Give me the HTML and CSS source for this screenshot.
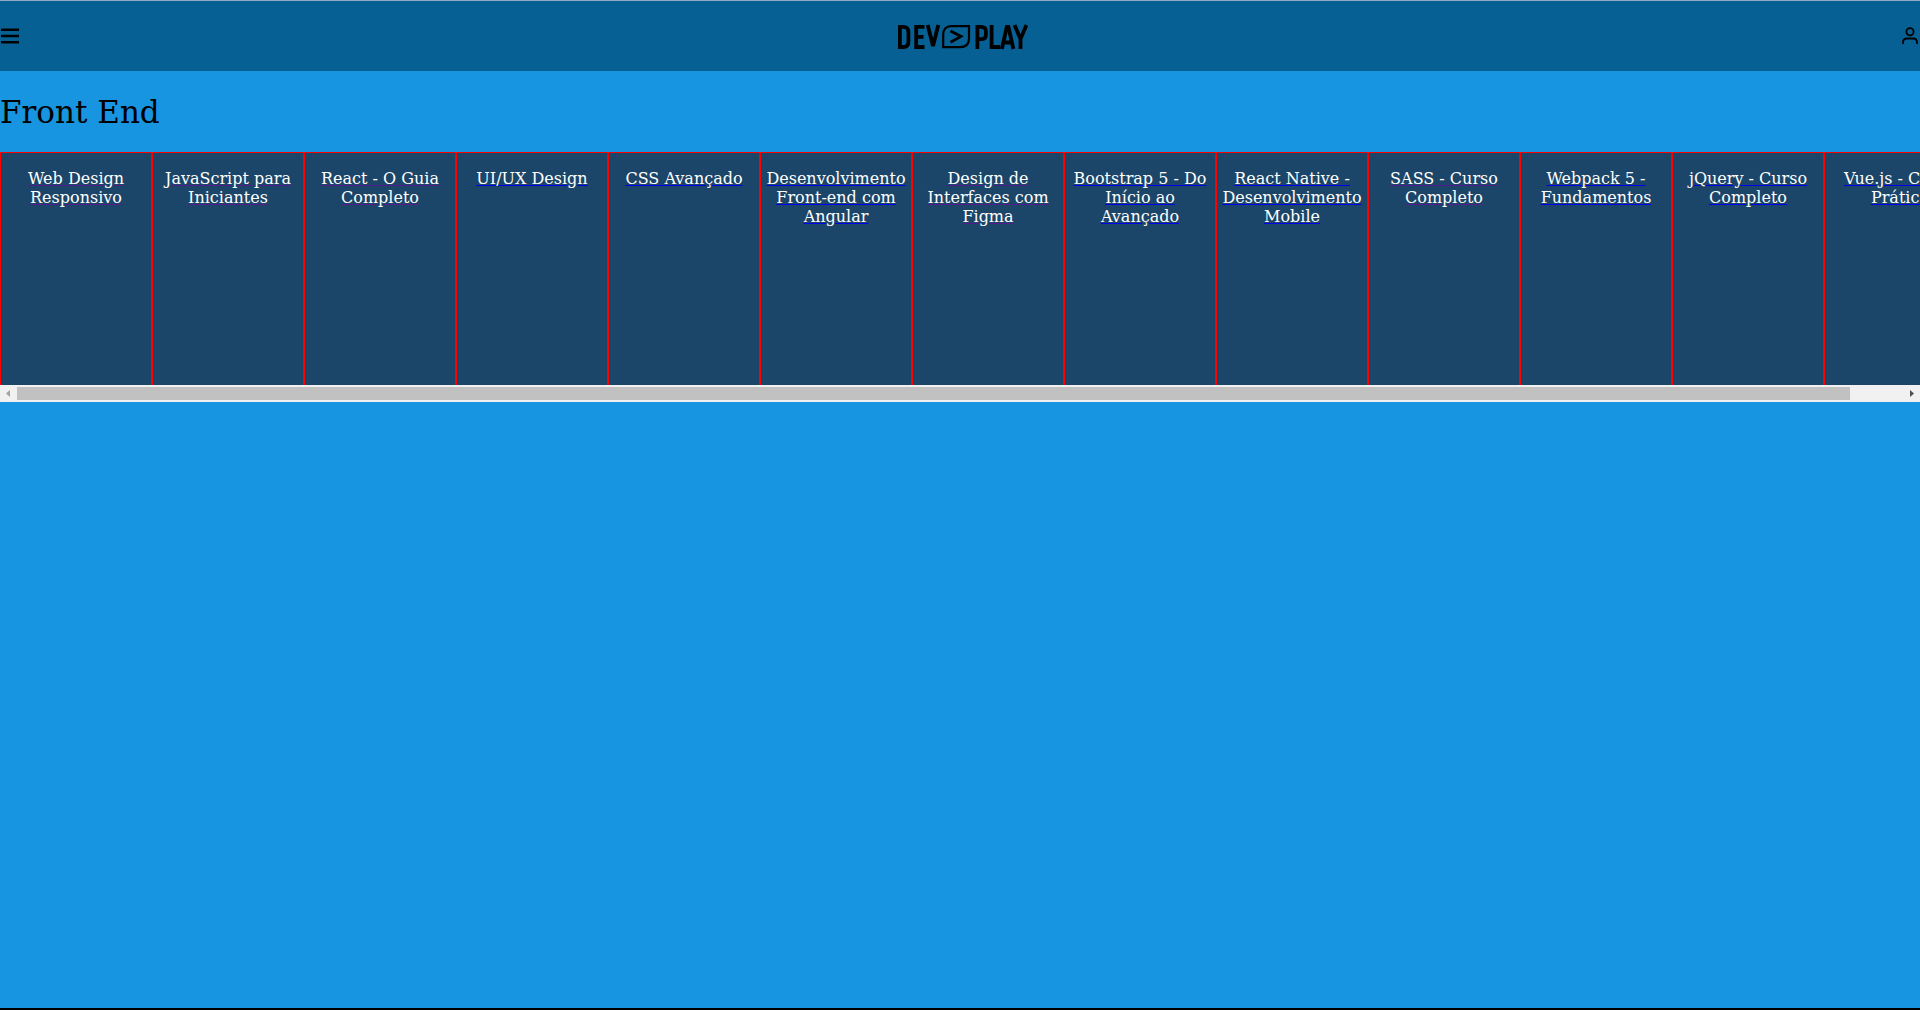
FILE: index.html
```html
<!DOCTYPE html>
<html lang="pt-BR">
<head>
<meta charset="utf-8">
<title>DevPlay</title>
<link rel="stylesheet" href="styles.css">
</head>
<body>
<header class="header">
  <button class="icon-button" type="button" aria-label="Menu">
    <svg width="20" height="20" viewBox="0 0 20 20" fill="none" stroke="#000" stroke-width="2.4"><path d="M1 3.7h18M1 10h18M1 16.3h18"/></svg>
  </button>
  <a class="logo" href="#" aria-label="DevPlay">
    <svg width="130" height="26" viewBox="0 0 130 26" fill="none" stroke="#000" stroke-width="3.8">
      <path d="M1.9 2.8v20.200h3.300q5.200 0 5.200-5V7.800q0-5-5.200-5zM26.500 2.800H18.200v20.200h8.300M18.200 12.800h7.300M29.700 1l5.300 21 5.300-21"/>
      <path stroke-width="2.2" d="M53 2.200h18v12.300q0 8.700-9 8.700H45.200V11q0-8.800 7.800-8.800z"/>
      <path stroke-width="2.800" d="m52.500 7 10.500 5.400-10.500 5.900"/>
      <path d="M79.400 25V2.800h3.600q4.900 0 4.900 4.500v3.400q0 4.500-4.900 4.500h-3.600M93.600 1v22h8.400M103.800 25l5-22.200h1.600l5 22.200M105.500 18.500h8M116.500 1l6 14 6-14M122.500 14v11"/>
    </svg>
  </a>
  <button class="icon-button" type="button" aria-label="Conta">
    <svg width="20" height="20" viewBox="0 0 20 20" fill="none" stroke="#000" stroke-width="1.8"><circle cx="10" cy="5.800" r="3.600"/><path d="M3 18v-1.500q0-4 4-4h6q4 0 4 4V18"/></svg>
  </button>
</header>
<main>
  <h1 class="title">Front End</h1>
  <nav class="carousel" aria-label="Cursos de Front End">
    <a class="card seen" href="#"><span class="name">Web Design Responsivo</span></a>
    <a class="card seen" href="#"><span class="name">JavaScript para Iniciantes</span></a>
    <a class="card seen" href="#"><span class="name">React - O Guia Completo</span></a>
    <a class="card" href="#"><span class="name">UI/UX Design</span></a>
    <a class="card" href="#"><span class="name">CSS Avançado</span></a>
    <a class="card" href="#"><span class="name">Desenvolvimento Front-end com Angular</span></a>
    <a class="card seen" href="#"><span class="name">Design de Interfaces com Figma</span></a>
    <a class="card" href="#"><span class="name">Bootstrap 5 - Do Início ao Avançado</span></a>
    <a class="card" href="#"><span class="name">React Native - Desenvolvimento Mobile</span></a>
    <a class="card seen" href="#"><span class="name">SASS - Curso Completo</span></a>
    <a class="card" href="#"><span class="name">Webpack 5 - Fundamentos</span></a>
    <a class="card" href="#"><span class="name">jQuery - Curso Completo</span></a>
    <a class="card" href="#"><span class="name">Vue.js - Curso Prático</span></a>
  </nav>
  <div class="scrollbar">
    <button class="arrow" type="button" aria-label="Anterior"><svg width="17" height="17" viewBox="0 0 17 17" fill="#a3a3a3"><path d="M10 5v7L6 8.500z"/></svg></button>
    <div class="track"><div class="thumb"></div></div>
    <button class="arrow" type="button" aria-label="Próximo"><svg width="17" height="17" viewBox="0 0 17 17" fill="#505050"><path d="M7 5v7l4-3.500z"/></svg></button>
  </div>
</main>
</body>
</html>
```
FILE: styles.css
```css
* { box-sizing: border-box; }
body {
  margin: 0;
  min-height: 100vh;
  background: #1795e1;
  border-top: 1px solid #94a8c3;
  border-bottom: 2px solid #000;
  font-family: "DejaVu Serif", serif;
  font-size: 16px;
  line-height: 19px;
}
.header {
  display: flex;
  align-items: center;
  justify-content: space-between;
  height: 70px;
  background: #066094;
}
.icon-button { display: flex; padding: 0; border: 0; background: none; }
.logo { display: flex; padding: 2px 0 0 6px; }
.title {
  margin: 0;
  padding: 21px 0 20px;
  font-size: 31px;
  line-height: 40px;
  font-weight: 400;
}
.carousel {
  display: flex;
  overflow-x: auto;
  scrollbar-width: none;
}
.card {
  flex: 0 0 152px;
  height: 233px;
  padding: 16px 4px 0;
  border: 1px solid #f00;
  border-bottom: 0;
  background: #1c4669;
  color: #00e;
  text-align: center;
  text-decoration: underline;
}
.seen { color: #551a8b; }
.name { color: #fff; }
.scrollbar { display: flex; height: 17px; background: #f1f1f1; }
.arrow { display: flex; width: 17px; padding: 0; border: 0; background: none; }
.track { flex: 1; padding: 2px 0; }
.thumb { width: 97.2%; height: 13px; background: #c1c1c1; }
```
